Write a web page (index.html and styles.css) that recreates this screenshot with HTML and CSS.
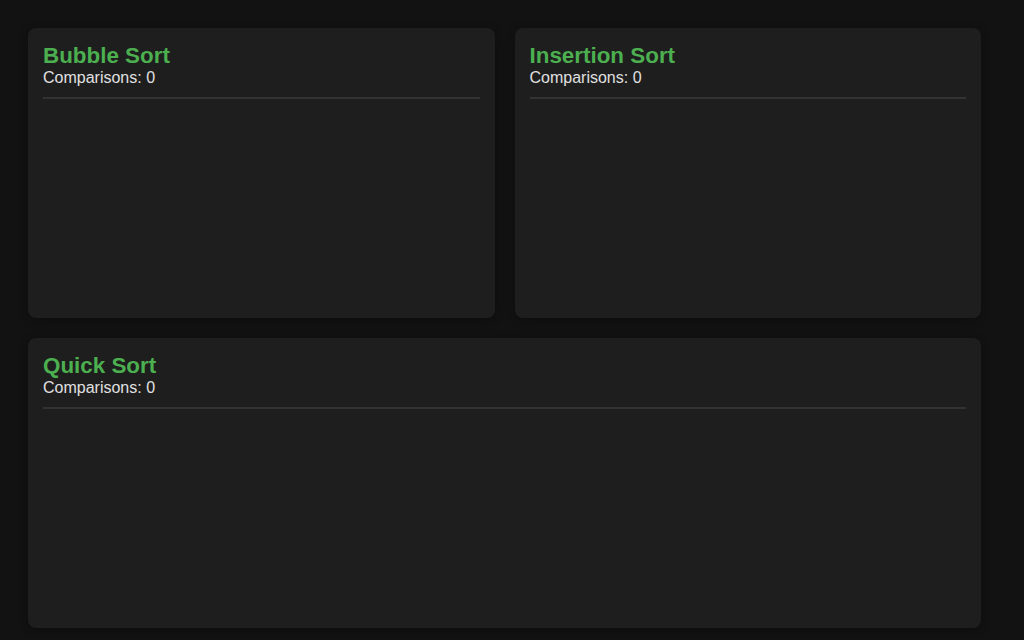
FILE: index.html
```html
<!DOCTYPE html>
<html lang="en">
<head>
  <meta charset="UTF-8">
  <meta name="viewport" content="width=device-width, initial-scale=1.0">
  <title>Sorting Visualizer</title>
  <link rel="stylesheet" href="styles.css">
</head>
<body>
  <div class="grid">
    <div class="panel">
      <h2>Bubble Sort</h2>
      <div class="stats">Comparisons: <span id="bubble-count">0</span></div>
      <div class="bars" id="bubble"></div>
    </div>
    <div class="panel">
      <h2>Insertion Sort</h2>
      <div class="stats">Comparisons: <span id="insertion-count">0</span></div>
      <div class="bars" id="insertion"></div>
    </div>
    <div class="panel wide">
      <h2>Quick Sort</h2>
      <div class="stats">Comparisons: <span id="quick-count">0</span></div>
      <div class="bars" id="quick"></div>
    </div>
  </div>
</body>
</html>
```

FILE: styles.css
```css
* {
  box-sizing: border-box;
  padding: 0;
  margin: 0;
}
html {
  overflow-y: scroll;
}
body {
  padding: 28px 43px 28px 28px;
  background: #121212;
  color: #e0e0e0;
  font-family: 'Liberation Sans', Arial, sans-serif;
}

.grid {
  display: grid;
  grid-template-columns: 1fr 1fr;
  gap: 20px;
}

.panel {
  display: flex;
  flex-direction: column;
  height: 290px;
  padding: 15px;
  background: #1e1e1e;
  border-radius: 8px;
  box-shadow: 0 2px 10px rgba(0, 0, 0, 0.3);
}

.panel.wide {
  grid-column: span 2;
}

h2 {
  font-size: 1.4em;
  font-weight: bold;
  color: #4caf50;
}

.stats {
  font-size: 16px;
  margin-bottom: 10px;
}

.bars {
  flex: 1;
  border-top: 2px solid #333;
}
```
